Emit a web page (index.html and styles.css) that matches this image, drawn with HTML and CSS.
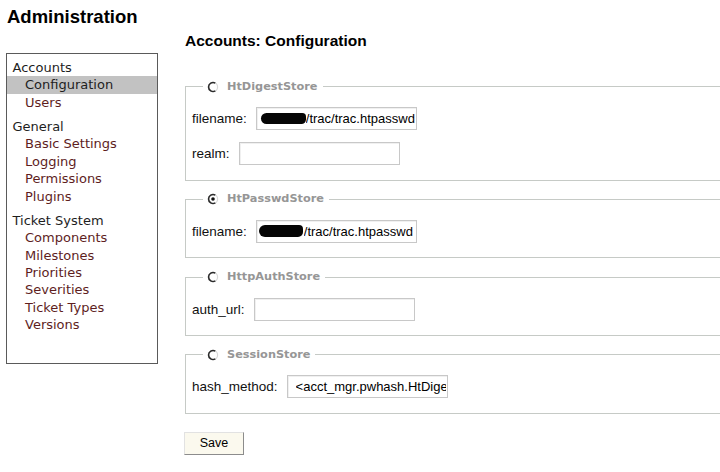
FILE: index.html
```html
<!DOCTYPE html>
<html lang="en">
<head>
<meta charset="utf-8">
<title>Administration</title>
<link rel="stylesheet" href="styles.css">
</head>
<body>
<div class="page">
  <h1 class="title">Administration</h1>
  <div class="layout">
    <nav class="tabs">
      <ul class="groups">
        <li class="group">
          <span class="group-name">Accounts</span>
          <ul class="items">
            <li class="item active"><a href="#">Configuration</a></li>
            <li class="item"><a href="#">Users</a></li>
          </ul>
        </li>
        <li class="group">
          <span class="group-name">General</span>
          <ul class="items">
            <li class="item"><a href="#">Basic Settings</a></li>
            <li class="item"><a href="#">Logging</a></li>
            <li class="item"><a href="#">Permissions</a></li>
            <li class="item"><a href="#">Plugins</a></li>
          </ul>
        </li>
        <li class="group">
          <span class="group-name">Ticket System</span>
          <ul class="items">
            <li class="item"><a href="#">Components</a></li>
            <li class="item"><a href="#">Milestones</a></li>
            <li class="item"><a href="#">Priorities</a></li>
            <li class="item"><a href="#">Severities</a></li>
            <li class="item"><a href="#">Ticket Types</a></li>
            <li class="item"><a href="#">Versions</a></li>
          </ul>
        </li>
      </ul>
    </nav>
    <main class="content">
      <h2 class="heading">Accounts: Configuration</h2>
      <form class="config">
        <fieldset class="store">
          <legend class="store-legend"><span class="radio"><svg viewBox="0 0 12 12" width="12" height="12"><circle cx="6" cy="6" r="4.6" fill="#fff" stroke="#d8d8d8" stroke-width="1.2"/><path d="M8.3 2.1 A4.5 4.5 0 1 0 8.3 9.9" fill="none" stroke="#2a2a2a" stroke-width="1.6"/></svg></span>HtDigestStore</legend>
          <div class="row">
            <label class="lbl">filename:</label>
            <span class="field"><span class="blot"></span><input class="txt txt-blot" type="text" value="/trac/trac.htpasswd"></span>
          </div>
          <div class="row">
            <label class="lbl">realm:</label>
            <span class="field"><input class="txt" type="text" value=""></span>
          </div>
        </fieldset>
        <fieldset class="store">
          <legend class="store-legend"><span class="radio"><svg viewBox="0 0 12 12" width="12" height="12"><circle cx="6" cy="6" r="4.6" fill="#fff" stroke="#d8d8d8" stroke-width="1.2"/><path d="M8.3 2.1 A4.5 4.5 0 1 0 8.3 9.9" fill="none" stroke="#2a2a2a" stroke-width="1.6"/><circle cx="6" cy="6" r="1.8" fill="#111"/></svg></span>HtPasswdStore</legend>
          <div class="row">
            <label class="lbl">filename:</label>
            <span class="field"><span class="blot blot-2"></span><input class="txt txt-blot2" type="text" value="/trac/trac.htpasswd"></span>
          </div>
        </fieldset>
        <fieldset class="store">
          <legend class="store-legend"><span class="radio"><svg viewBox="0 0 12 12" width="12" height="12"><circle cx="6" cy="6" r="4.6" fill="#fff" stroke="#d8d8d8" stroke-width="1.2"/><path d="M8.3 2.1 A4.5 4.5 0 1 0 8.3 9.9" fill="none" stroke="#2a2a2a" stroke-width="1.6"/></svg></span>HttpAuthStore</legend>
          <div class="row">
            <label class="lbl">auth_url:</label>
            <span class="field"><input class="txt" type="text" value=""></span>
          </div>
        </fieldset>
        <fieldset class="store">
          <legend class="store-legend"><span class="radio"><svg viewBox="0 0 12 12" width="12" height="12"><circle cx="6" cy="6" r="4.6" fill="#fff" stroke="#d8d8d8" stroke-width="1.2"/><path d="M8.3 2.1 A4.5 4.5 0 1 0 8.3 9.9" fill="none" stroke="#2a2a2a" stroke-width="1.6"/></svg></span>SessionStore</legend>
          <div class="row">
            <label class="lbl">hash_method:</label>
            <span class="field"><input class="txt txt-hash" type="text" value="&lt;acct_mgr.pwhash.HtDigestHashMethod object&gt;"></span>
          </div>
        </fieldset>
        <button class="save" type="button">Save</button>
      </form>
    </main>
  </div>
</div>
</body>
</html>
```

FILE: styles.css
```css
html {
  overflow: hidden;
}

body {
  margin: 0;
  background: #fff;
  font-family: "Liberation Sans", Arial, sans-serif;
  color: #000;
}

.page {
  width: 900px;
  padding: 0 6px;
}

.title {
  margin: 6px 0 0 1px;
  font: bold 18.5px/22px "Liberation Sans", Arial, sans-serif;
  color: #000;
}

.layout {
  display: flex;
  align-items: flex-start;
}

/* sidebar */
.tabs {
  flex: none;
  box-sizing: border-box;
  width: 152px;
  height: 311.6px;
  margin-top: 24.7px;
  border: 1px solid #5a5a5a;
  font: 13px/17.4px "DejaVu Sans", Verdana, sans-serif;
}

.tabs ul {
  list-style: none;
  margin: 0;
  padding: 0;
}

.tabs .groups {
  padding-top: 5.4px;
}

.group {
  margin-bottom: 6.7px;
}

.group-name {
  display: block;
  padding-left: 5.5px;
  color: #1e1e1e;
}

.item a {
  display: block;
  padding-left: 18px;
  color: #5e1e1e;
  text-decoration: none;
}

.item.active a {
  background: #c2c2c2;
  color: #1e1e1e;
}

/* main */
.content {
  flex: none;
  margin-left: 27px;
  width: 700px;
}

.heading {
  margin: 4.2px 0 0;
  font: bold 15.5px/18px "Liberation Sans", Arial, sans-serif;
  color: #000;
}

.config {
  margin-top: 29.5px;
}

.store {
  width: 600px;
  margin: 0 0 11.7px;
  padding: 13.5px 6px 14.5px;
  border: 1px solid #c6cac6;
  min-width: 0;
}

.store-legend {
  margin-left: 11px;
  padding: 0 5px 0 4px;
  font: bold 11.3px/14px "DejaVu Sans", Verdana, sans-serif;
  color: #969696;
  display: flex;
  align-items: center;
}

.radio {
  display: inline-flex;
  width: 12px;
  height: 12px;
  margin-right: 8px;
}

.row {
  display: flex;
  align-items: center;
  gap: 9px;
}

.row + .row {
  margin-top: 12px;
}

.lbl {
  font-size: 13.5px;
  color: #111;
}

.field {
  position: relative;
  display: inline-flex;
}

.txt {
  box-sizing: border-box;
  width: 161px;
  height: 23px;
  margin: 0;
  padding: 0 1px 0 6px;
  border: 1px solid #c8c8c8;
  box-shadow: inset 1px 1px 0 #f0f0f0;
  background: #fff;
  font: 13px "Liberation Sans", Arial, sans-serif;
  color: #000;
  outline: none;
}

.txt-blot {
  padding-left: 49px;
}

.txt-blot2 {
  padding-left: 47px;
}

.txt-hash {
  padding-left: 8px;
}

.blot {
  position: absolute;
  left: 5px;
  top: 6px;
  width: 45px;
  height: 11px;
  border-radius: 6px 4px 5px 6px;
  background: #050505;
}

.blot-2 {
  left: 3px;
  top: 5px;
  width: 44px;
  height: 12px;
}

.save {
  display: block;
  width: 60px;
  height: 23px;
  margin: 18px 0 0 -1px;
  padding: 0;
  background: #fbf9ee;
  border: 1px solid;
  border-color: #e2e2e2 #8c8c8c #8c8c8c #e2e2e2;
  font: 12.5px "Liberation Sans", Arial, sans-serif;
  color: #000;
}
```
